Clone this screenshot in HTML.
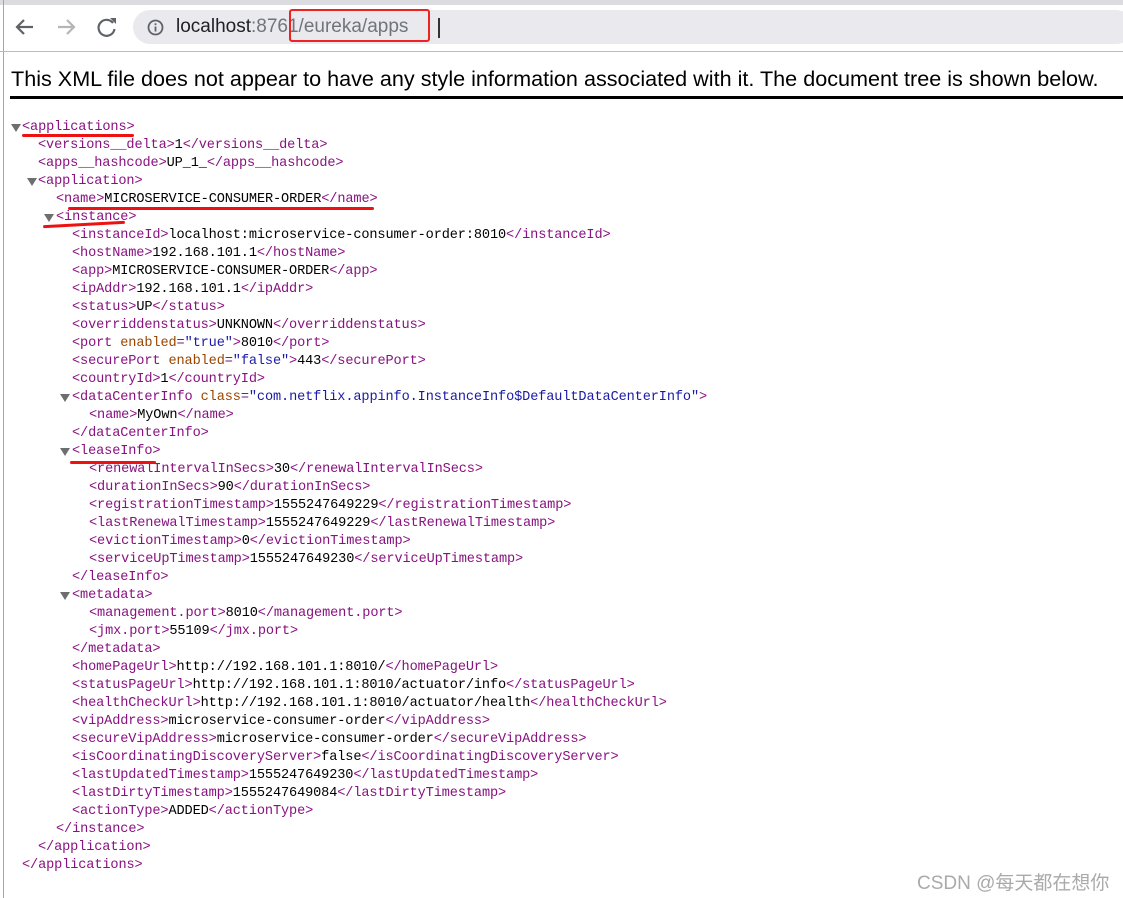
<!DOCTYPE html>
<html><head><meta charset="utf-8"><style>
body{margin:0;width:1123px;height:898px;background:#fff;position:relative;overflow:hidden;font-family:"Liberation Sans",sans-serif}
.top{position:absolute;left:0;top:0;width:1123px;height:5px;background:#dcdce0}
.bar{position:absolute;left:133px;top:10px;width:1000px;height:34px;border-radius:17px;background:#e9e9ee}
.sep{position:absolute;left:0;top:51px;width:1123px;height:1px;background:#bbb}
.url{position:absolute;left:176px;top:16px;font-size:19px;color:#202124}
.url .g{color:#70757a}
.box{position:absolute;left:289px;top:9px;width:141px;height:33px;border:2px solid #e22;border-radius:3px;box-sizing:border-box}
.hdr{position:absolute;left:11px;top:66px;font-size:21.6px;color:#000;white-space:nowrap}
.rule{position:absolute;left:10px;top:96px;width:1113px;height:3px;background:#000}
.vl{position:absolute;left:3px;top:0;width:1px;height:898px;background:#e88}
.ln{position:absolute;left:0;height:18px;line-height:18px;margin-top:2px;font-family:"Liberation Mono","Noto Sans CJK SC",monospace;font-size:13.6px;color:#000;white-space:pre;letter-spacing:-0.12px}
.t{color:#881280}.a{color:#994500}.v{color:#1a1aa6}
.tri{position:absolute;margin-top:2px;width:0;height:0;border-left:5px solid transparent;border-right:5px solid transparent;border-top:8px solid #6e6e6e}
.ul{position:absolute;height:3px;background:#e11;border-radius:2px}
.wm{position:absolute;left:917px;top:868px;font-size:19px;color:#aaa;font-family:"Liberation Sans","Noto Sans CJK SC",sans-serif}
</style></head><body>
<div class="top"></div><div class="vl"></div>
<svg style="position:absolute;left:14px;top:16px" width="110" height="22" viewBox="0 0 110 22">
<path d="M19 11H4M10 4L3 11l7 7" stroke="#5f6368" stroke-width="2.2" fill="none"/>
<path d="M44 11h15M53 4l7 7-7 7" stroke="#b6b6b6" stroke-width="2.2" fill="none"/>
<path d="M99 7a8 8 0 1 0 1.5 6" stroke="#5f6368" stroke-width="2.2" fill="none"/><path d="M96 2h6v6z" fill="#5f6368"/>
</svg>
<div class="bar"></div>
<svg style="position:absolute;left:147px;top:19px" width="17" height="17"><circle cx="8.5" cy="8.5" r="7" stroke="#5f6368" stroke-width="1.8" fill="none"/><rect x="7.6" y="7.5" width="1.8" height="5" fill="#5f6368"/><rect x="7.6" y="4.3" width="1.8" height="1.8" fill="#5f6368"/></svg>
<div class="url">localhost<span class="g">:8761/eureka/apps</span></div>
<div class="box"></div>
<div style="position:absolute;left:438px;top:18px;width:2px;height:20px;background:#333"></div>
<div class="sep"></div>
<div class="hdr">This XML file does not appear to have any style information associated with it. The document tree is shown below.</div>
<div class="rule"></div>

<div class="tri" style="left:11px;top:122px"></div>
<div class="ln" style="top:117px;left:22px"><span class="t">&lt;applications&gt;</span></div>
<div class="ln" style="top:135px;left:38px"><span class="t">&lt;versions__delta&gt;</span>1<span class="t">&lt;/versions__delta&gt;</span></div>
<div class="ln" style="top:153px;left:38px"><span class="t">&lt;apps__hashcode&gt;</span>UP_1_<span class="t">&lt;/apps__hashcode&gt;</span></div>
<div class="tri" style="left:27px;top:176px"></div>
<div class="ln" style="top:171px;left:38px"><span class="t">&lt;application&gt;</span></div>
<div class="ln" style="top:189px;left:56px"><span class="t">&lt;name&gt;</span>MICROSERVICE-CONSUMER-ORDER<span class="t">&lt;/name&gt;</span></div>
<div class="tri" style="left:44px;top:212px"></div>
<div class="ln" style="top:207px;left:56px"><span class="t">&lt;instance&gt;</span></div>
<div class="ln" style="top:225px;left:72px"><span class="t">&lt;instanceId&gt;</span>localhost:microservice-consumer-order:8010<span class="t">&lt;/instanceId&gt;</span></div>
<div class="ln" style="top:243px;left:72px"><span class="t">&lt;hostName&gt;</span>192.168.101.1<span class="t">&lt;/hostName&gt;</span></div>
<div class="ln" style="top:261px;left:72px"><span class="t">&lt;app&gt;</span>MICROSERVICE-CONSUMER-ORDER<span class="t">&lt;/app&gt;</span></div>
<div class="ln" style="top:279px;left:72px"><span class="t">&lt;ipAddr&gt;</span>192.168.101.1<span class="t">&lt;/ipAddr&gt;</span></div>
<div class="ln" style="top:297px;left:72px"><span class="t">&lt;status&gt;</span>UP<span class="t">&lt;/status&gt;</span></div>
<div class="ln" style="top:315px;left:72px"><span class="t">&lt;overriddenstatus&gt;</span>UNKNOWN<span class="t">&lt;/overriddenstatus&gt;</span></div>
<div class="ln" style="top:333px;left:72px"><span class="t">&lt;port</span> <span class="a">enabled</span><span class="t">=</span><span class="v">"true"</span><span class="t">&gt;</span>8010<span class="t">&lt;/port&gt;</span></div>
<div class="ln" style="top:351px;left:72px"><span class="t">&lt;securePort</span> <span class="a">enabled</span><span class="t">=</span><span class="v">"false"</span><span class="t">&gt;</span>443<span class="t">&lt;/securePort&gt;</span></div>
<div class="ln" style="top:369px;left:72px"><span class="t">&lt;countryId&gt;</span>1<span class="t">&lt;/countryId&gt;</span></div>
<div class="tri" style="left:60px;top:392px"></div>
<div class="ln" style="top:387px;left:72px"><span class="t">&lt;dataCenterInfo</span> <span class="a">class</span><span class="t">=</span><span class="v">"com.netflix.appinfo.InstanceInfo$DefaultDataCenterInfo"</span><span class="t">&gt;</span></div>
<div class="ln" style="top:405px;left:89px"><span class="t">&lt;name&gt;</span>MyOwn<span class="t">&lt;/name&gt;</span></div>
<div class="ln" style="top:423px;left:72px"><span class="t">&lt;/dataCenterInfo&gt;</span></div>
<div class="tri" style="left:60px;top:446px"></div>
<div class="ln" style="top:441px;left:72px"><span class="t">&lt;leaseInfo&gt;</span></div>
<div class="ln" style="top:459px;left:89px"><span class="t">&lt;renewalIntervalInSecs&gt;</span>30<span class="t">&lt;/renewalIntervalInSecs&gt;</span></div>
<div class="ln" style="top:477px;left:89px"><span class="t">&lt;durationInSecs&gt;</span>90<span class="t">&lt;/durationInSecs&gt;</span></div>
<div class="ln" style="top:495px;left:89px"><span class="t">&lt;registrationTimestamp&gt;</span>1555247649229<span class="t">&lt;/registrationTimestamp&gt;</span></div>
<div class="ln" style="top:513px;left:89px"><span class="t">&lt;lastRenewalTimestamp&gt;</span>1555247649229<span class="t">&lt;/lastRenewalTimestamp&gt;</span></div>
<div class="ln" style="top:531px;left:89px"><span class="t">&lt;evictionTimestamp&gt;</span>0<span class="t">&lt;/evictionTimestamp&gt;</span></div>
<div class="ln" style="top:549px;left:89px"><span class="t">&lt;serviceUpTimestamp&gt;</span>1555247649230<span class="t">&lt;/serviceUpTimestamp&gt;</span></div>
<div class="ln" style="top:567px;left:72px"><span class="t">&lt;/leaseInfo&gt;</span></div>
<div class="tri" style="left:60px;top:590px"></div>
<div class="ln" style="top:585px;left:72px"><span class="t">&lt;metadata&gt;</span></div>
<div class="ln" style="top:603px;left:89px"><span class="t">&lt;management.port&gt;</span>8010<span class="t">&lt;/management.port&gt;</span></div>
<div class="ln" style="top:621px;left:89px"><span class="t">&lt;jmx.port&gt;</span>55109<span class="t">&lt;/jmx.port&gt;</span></div>
<div class="ln" style="top:639px;left:72px"><span class="t">&lt;/metadata&gt;</span></div>
<div class="ln" style="top:657px;left:72px"><span class="t">&lt;homePageUrl&gt;</span>http://192.168.101.1:8010/<span class="t">&lt;/homePageUrl&gt;</span></div>
<div class="ln" style="top:675px;left:72px"><span class="t">&lt;statusPageUrl&gt;</span>http://192.168.101.1:8010/actuator/info<span class="t">&lt;/statusPageUrl&gt;</span></div>
<div class="ln" style="top:693px;left:72px"><span class="t">&lt;healthCheckUrl&gt;</span>http://192.168.101.1:8010/actuator/health<span class="t">&lt;/healthCheckUrl&gt;</span></div>
<div class="ln" style="top:711px;left:72px"><span class="t">&lt;vipAddress&gt;</span>microservice-consumer-order<span class="t">&lt;/vipAddress&gt;</span></div>
<div class="ln" style="top:729px;left:72px"><span class="t">&lt;secureVipAddress&gt;</span>microservice-consumer-order<span class="t">&lt;/secureVipAddress&gt;</span></div>
<div class="ln" style="top:747px;left:72px"><span class="t">&lt;isCoordinatingDiscoveryServer&gt;</span>false<span class="t">&lt;/isCoordinatingDiscoveryServer&gt;</span></div>
<div class="ln" style="top:765px;left:72px"><span class="t">&lt;lastUpdatedTimestamp&gt;</span>1555247649230<span class="t">&lt;/lastUpdatedTimestamp&gt;</span></div>
<div class="ln" style="top:783px;left:72px"><span class="t">&lt;lastDirtyTimestamp&gt;</span>1555247649084<span class="t">&lt;/lastDirtyTimestamp&gt;</span></div>
<div class="ln" style="top:801px;left:72px"><span class="t">&lt;actionType&gt;</span>ADDED<span class="t">&lt;/actionType&gt;</span></div>
<div class="ln" style="top:819px;left:56px"><span class="t">&lt;/instance&gt;</span></div>
<div class="ln" style="top:837px;left:38px"><span class="t">&lt;/application&gt;</span></div>
<div class="ln" style="top:855px;left:22px"><span class="t">&lt;/applications&gt;</span></div>

<div class="ul" style="left:22px;top:134px;width:112px"></div>
<div class="ul" style="left:68px;top:207px;width:306px"></div>
<div class="ul" style="left:43px;top:223px;width:82px;transform:rotate(-3deg)"></div>
<div class="ul" style="left:70px;top:461px;width:86px"></div>
<div class="wm">CSDN @每天都在想你</div>
</body></html>
